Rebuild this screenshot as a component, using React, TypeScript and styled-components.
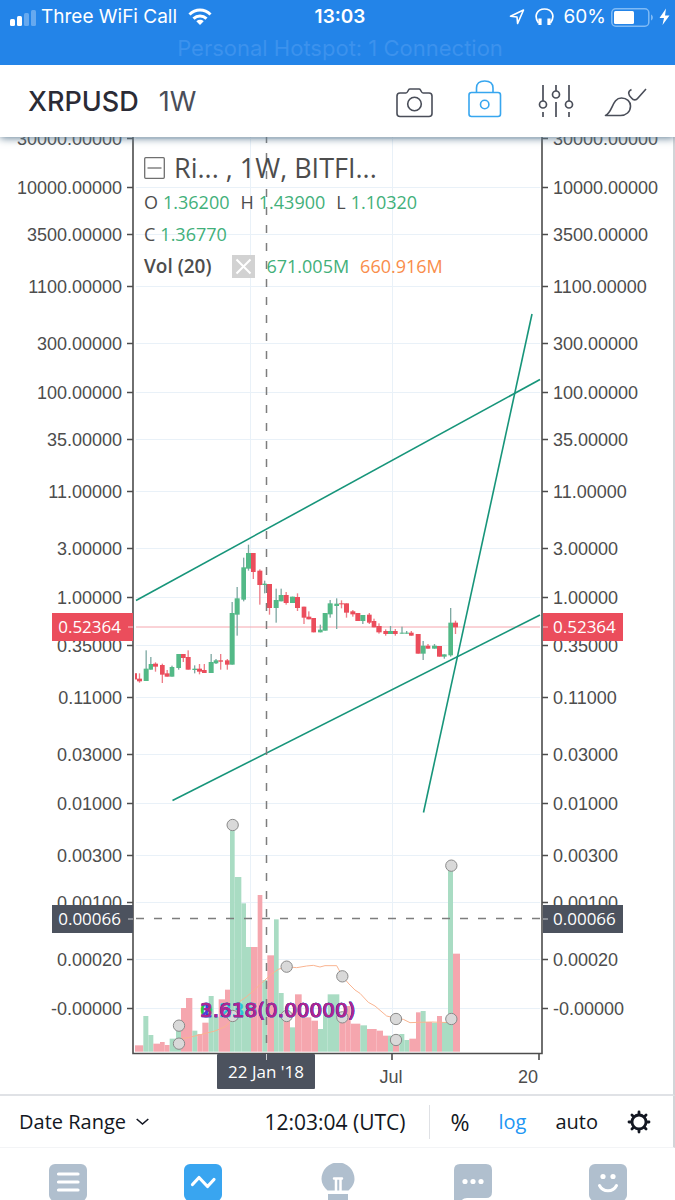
import React from "react";
import styled, { createGlobalStyle } from "styled-components";

const GlobalStyle = createGlobalStyle`
  * { box-sizing: border-box; }
  body { margin: 0; background: #ffffff; }
  button { font: inherit; color: inherit; background: none; border: 0; padding: 0; margin: 0; cursor: pointer; }
  svg { display: block; }
`;

const Page = styled.div`
  display: flex;
  flex-direction: column;
  font-family: "Open Sans", "Noto Sans", sans-serif;
  color: #131722;
`;

const StatusBar = styled.div`
  background: #2384e8;
  color: #ffffff;
  font-family: Inter, "Liberation Sans", sans-serif;
  font-size: 19px;
  line-height: 24px;
  height: 65px;
  padding: 5px 5px 0 10px;
`;

const StatusRow = styled.div`
  display: grid;
  grid-template-columns: 1fr auto 1fr;
  align-items: center;
`;

const StatusSide = styled.div<{ $end?: boolean }>`
  display: flex;
  align-items: center;
  gap: ${(p) => (p.$end ? 10 : 5)}px;
  justify-content: ${(p) => (p.$end ? "flex-end" : "flex-start")};
  white-space: nowrap;
`;

const Carrier = styled.span`
  margin-right: 6px;
`;

const BatteryGroup = styled.span`
  display: flex;
  align-items: center;
  gap: 5px;
`;

const Clock = styled.span`
  font-weight: 600;
`;

const Hotspot = styled.div`
  margin-top: 7px;
  text-align: center;
  font-size: 22px;
  color: #3c92ed;
`;

const Header = styled.header`
  position: relative;
  z-index: 2;
  display: flex;
  align-items: center;
  justify-content: space-between;
  height: 72px;
  padding: 0 28px;
  background: #ffffff;
  box-shadow: 0 1px 8px #5f7c92;
  clip-path: inset(0 0 -12px 0);
  font-family: Inter, "Liberation Sans", sans-serif;
  font-size: 27px;
`;

const SymbolGroup = styled.div`
  display: flex;
  gap: 20px;
`;

const SymbolButton = styled.button`
  color: #2b2b35;
  font-weight: 500;
`;

const IntervalButton = styled.button`
  color: #4a4e59;
`;

const ToolGroup = styled.div`
  display: flex;
  align-items: center;
  gap: 30px;
`;

const ToolButton = styled.button<{ $active?: boolean }>`
  color: ${(p) => (p.$active ? "#37a6ef" : "#4a4e59")};
`;

const ChartArea = styled.main`
  position: relative;
  overflow: hidden;
  border-right: 2px solid #d2d5d8;
  border-bottom: 2px solid #e0e2e6;
`;

const ChartSvg = styled.svg`
  width: 100%;
  height: auto;
`;

const Legend = styled.div`
  position: absolute;
  top: 12px;
  left: 144px;
  display: flex;
  flex-direction: column;
  color: #4d4d4d;
  font-size: 18px;
  line-height: 32px;
  white-space: nowrap;
`;

const LegendTitle = styled.div`
  display: flex;
  align-items: center;
  gap: 9px;
  height: 37px;
  font-size: 27px;
`;

const LegendRow = styled.div`
  display: flex;
  align-items: center;
  gap: 11px;
`;

const Quote = styled.span`
  display: flex;
  gap: 5px;
`;

const Value = styled.span<{ $tone?: string }>`
  color: ${(p) => p.$tone ?? "#42b07a"};
`;

const StudyName = styled.span`
  font-size: 19px;
  font-weight: 600;
  margin-right: 10px;
`;

const Toolbar = styled.div`
  display: flex;
  align-items: center;
  height: 52px;
  padding: 0 22px 0 19px;
  border-right: 2px solid #d2d5d8;
  border-bottom: 1px solid #f3f4f6;
  font-size: 20px;
  white-space: nowrap;
`;

const RangeButton = styled.button`
  display: flex;
  align-items: center;
  gap: 10px;
  margin-right: auto;
`;

const UtcClock = styled.span`
  font-size: 21px;
`;

const Divider = styled.span`
  width: 1px;
  height: 34px;
  margin: 0 20px 0 24px;
  background: #dfe1e5;
`;

const ScaleGroup = styled.div`
  display: flex;
  align-items: center;
  gap: 29px;
`;

const ScaleButton = styled.button<{ $active?: boolean; $large?: boolean }>`
  color: ${(p) => (p.$active ? "#2196f3" : "#131722")};
  font-size: ${(p) => (p.$large ? 23 : 20)}px;
`;

const Tabs = styled.nav`
  display: grid;
  grid-template-columns: repeat(5, 1fr);
  height: 52px;
  padding-top: 15px;
  overflow: hidden;
`;

const Tab = styled.button<{ $active?: boolean }>`
  display: flex;
  justify-content: center;
  align-items: flex-start;
  color: ${(p) => (p.$active ? "#39a5f0" : "#b0bfce")};
`;

const AxisText = styled.text`
  font-family: "Liberation Sans", Arial, sans-serif;
  font-size: 18px;
  fill: #4d4d4d;
`;

const TagText = styled.text`
  font-family: "Open Sans", "Noto Sans", sans-serif;
  font-size: 17px;
  fill: #ffffff;
`;

const LevelText = styled.text`
  font-family: "DejaVu Sans", Verdana, sans-serif;
  font-size: 20px;
  stroke-width: 0.6px;
`;

const GREEN = "#53b987";
const RED = "#eb4d5c";

const priceTicks: [string, number][] = [
  ["30000.00000", 138], ["10000.00000", 187], ["3500.00000", 234], ["1100.00000", 286],
  ["300.00000", 343], ["100.00000", 392], ["35.00000", 439], ["11.00000", 491],
  ["3.00000", 548], ["1.00000", 597], ["0.35000", 645], ["0.11000", 697],
  ["0.03000", 754], ["0.01000", 803], ["0.00300", 855], ["0.00100", 902],
  ["0.00020", 959], ["-0.00000", 1008],
];

// left, right, body top, body bottom, high, low, direction
type Candle = [number, number, number, number, number, number, "u" | "d"];
const candles: Candle[] = [
  [30, 36, 430, 448, 430, 448, "d"], [36, 51, 446, 454, 430, 458, "d"],
  [56, 71, 416, 453, 361, 453, "u"], [71, 84, 402, 419, 381, 419, "u"],
  [84, 99, 401, 410, 397, 425, "d"], [105, 119, 405, 434, 401, 459, "d"],
  [119, 134, 430, 440, 420, 440, "d"], [134, 148, 411, 440, 407, 440, "u"],
  [154, 168, 372, 414, 372, 419, "u"], [168, 182, 372, 384, 372, 396, "d"],
  [182, 197, 381, 419, 361, 419, "d"], [202, 216, 416, 420, 406, 430, "u"],
  [216, 231, 416, 425, 402, 433, "d"], [231, 245, 420, 429, 402, 429, "d"],
  [251, 266, 396, 429, 372, 429, "u"], [266, 280, 391, 400, 387, 402, "u"],
  [280, 294, 391, 395, 372, 419, "d"], [300, 314, 391, 404, 387, 419, "d"],
  [314, 329, 249, 404, 216, 404, "u"], [329, 344, 205, 254, 171, 317, "u"],
  [349, 363, 112, 209, 83, 214, "u"], [363, 378, 69, 116, 44, 122, "u"],
  [378, 392, 69, 126, 69, 147, "d"], [397, 412, 122, 165, 118, 224, "d"],
  [412, 426, 161, 165, 152, 190, "u"], [426, 441, 162, 234, 162, 254, "d"],
  [446, 461, 210, 234, 176, 278, "u"], [461, 476, 195, 214, 176, 214, "u"],
  [476, 491, 195, 219, 186, 224, "d"], [495, 510, 200, 219, 200, 219, "u"],
  [510, 525, 201, 234, 190, 243, "d"], [530, 544, 230, 263, 230, 282, "d"],
  [544, 559, 260, 268, 244, 268, "d"], [559, 573, 264, 307, 264, 307, "d"],
  [579, 593, 299, 307, 284, 307, "u"], [593, 608, 249, 302, 249, 302, "u"],
  [608, 623, 220, 253, 210, 263, "u"], [628, 642, 221, 228, 205, 297, "u"],
  [642, 657, 220, 223, 211, 235, "d"], [657, 672, 220, 248, 220, 263, "d"],
  [676, 691, 244, 253, 240, 260, "d"], [691, 706, 249, 273, 249, 273, "d"],
  [706, 721, 255, 273, 255, 282, "u"], [726, 740, 254, 278, 249, 282, "d"],
  [740, 754, 273, 292, 266, 292, "d"], [754, 770, 288, 307, 280, 311, "d"],
  [775, 789, 303, 312, 298, 317, "d"], [789, 804, 303, 312, 288, 312, "u"],
  [804, 818, 303, 312, 297, 317, "d"], [824, 838, 308, 311, 290, 311, "u"],
  [838, 852, 308, 311, 303, 311, "u"], [852, 866, 308, 317, 303, 317, "d"],
  [872, 887, 312, 371, 312, 371, "d"], [887, 902, 347, 371, 333, 390, "u"],
  [902, 916, 347, 356, 342, 356, "d"], [921, 936, 347, 356, 342, 356, "u"],
  [936, 951, 348, 380, 348, 380, "d"], [951, 965, 373, 380, 373, 386, "u"],
  [970, 984, 278, 376, 234, 380, "u"], [984, 999, 278, 292, 272, 312, "d"],
];

// left, right, top, direction
type Bar = [number, number, number, "u" | "d"];
const VOLUME_BASE = 755;
const volumes: Bar[] = [
  [30, 55, 736, "d"], [55, 70, 648, "u"], [70, 85, 705, "u"], [85, 105, 731, "d"],
  [105, 119, 726, "d"], [119, 134, 735, "d"], [134, 153, 716, "u"], [153, 168, 670, "u"],
  [168, 183, 624, "d"], [183, 202, 594, "d"], [202, 217, 692, "u"], [217, 232, 702, "d"],
  [232, 251, 668, "d"], [251, 266, 588, "u"], [266, 281, 650, "u"], [281, 300, 598, "d"],
  [300, 315, 569, "d"], [315, 329, 75, "u"], [329, 349, 231, "u"], [349, 363, 310, "u"],
  [363, 378, 441, "u"], [378, 398, 441, "d"], [398, 412, 285, "d"], [412, 427, 540, "u"],
  [427, 447, 466, "d"], [447, 461, 358, "u"], [461, 476, 579, "u"], [476, 495, 650, "d"],
  [495, 510, 682, "u"], [510, 530, 583, "d"], [530, 559, 652, "d"], [559, 579, 662, "d"],
  [579, 594, 687, "u"], [594, 608, 640, "u"], [608, 643, 583, "u"], [643, 662, 655, "d"],
  [662, 677, 618, "d"], [677, 706, 671, "d"], [706, 726, 676, "u"], [726, 755, 687, "d"],
  [755, 774, 692, "d"], [774, 789, 707, "d"], [789, 804, 707, "u"], [804, 823, 735, "d"],
  [823, 838, 702, "u"], [838, 853, 720, "u"], [853, 873, 716, "d"], [873, 887, 637, "d"],
  [887, 902, 633, "u"], [902, 921, 666, "d"], [921, 936, 668, "u"], [936, 951, 648, "d"],
  [951, 969, 666, "u"], [969, 984, 197, "u"], [984, 1005, 461, "d"],
];

const averagePath =
  "M162 716 L190 713 L230 703 L270 693 L300 680 L325 656 L345 604 L365 590 L390 568 L420 540 L440 522 L460 508 L485 500 L515 503 L545 498 L565 496 L585 501 L600 497 L635 497 L653 530 L672 552 L690 570 L705 580 L730 607 L750 618 L785 648 L813 655 L835 658 L855 668 L880 667 L920 666 L979 668";

const handles: [number, number][] = [
  [162, 677], [162, 731], [323, 75], [323, 648], [485, 500], [485, 648],
  [652, 529], [652, 652], [813, 657], [813, 720], [979, 197], [979, 657],
];

const levels: [string, string][] = [
  ["0.236(0.00000)", "#26c6da"],
  ["0.618(0.00000)", "#2fc53a"],
  ["1.618(0.00000)", "#2b3fe0"],
  ["2.618(0.00000)", "#5a35d6"],
  ["3.618(0.00000)", "#b0258f"],
];

function PriceTag({ y, color, label }: { y: number; color: string; label: string }) {
  return (
    <g>
      <rect x="52" y={y - 14} width="81" height="28" fill={color} />
      <rect x="543" y={y - 14} width="80" height="28" fill={color} />
      <path d={`M128 ${y}H133M543 ${y}H548`} stroke="#ffffff" opacity="0.7" />
      <TagText x="121" y={y + 6} textAnchor="end">{label}</TagText>
      <TagText x="553" y={y + 6}>{label}</TagText>
    </g>
  );
}

function Chart() {
  return (
    <ChartSvg viewBox="0 137 673 957" role="img" aria-label="XRPUSD weekly price chart">
      <g stroke="#e9f1f8" strokeWidth="1">
        {priceTicks.map(([label, y]) => (
          <path key={label} d={`M136 ${y + 0.5}H540`} />
        ))}
        <path d="M250.5 137V1052M392.5 137V1052" />
      </g>

      <g transform="translate(125 800) scale(0.33333)">
        {volumes.map(([l, r, top, dir]) => (
          <rect key={l} x={l} y={top} width={r - l} height={VOLUME_BASE - top} fill={dir === "u" ? "#a9dcc3" : "#f5a6ae"} />
        ))}
        <path d={averagePath} fill="none" stroke="#f9b491" strokeWidth="3" />
      </g>

      <path d="M136 627H540" stroke="#f5a6ae" />

      <g transform="translate(125 530) scale(0.33333)">
        {candles.map(([l, r, top, bottom, high, low, dir]) => (
          <g key={l}>
            <rect x={(l + r) / 2 - 2} y={high} width="4" height={low - high} fill={dir === "u" ? "#7fa9a3" : "#ee7d88"} />
            <rect x={l} y={top} width={r - l} height={bottom - top} fill={dir === "u" ? GREEN : RED} />
          </g>
        ))}
      </g>

      <g stroke="#17957a" strokeWidth="1.6">
        <path d="M136 600.5L540 379.5" />
        <path d="M172.5 800.5L540 615" />
        <path d="M423.5 812.5L532 314" />
      </g>

      <g transform="translate(125 800) scale(0.33333)" fill="#d9d9d9" stroke="#8a8a8a" strokeWidth="3">
        {handles.map(([cx, cy]) => (
          <circle key={`${cx}-${cy}`} cx={cx} cy={cy} r="17" />
        ))}
      </g>

      {levels.map(([label, color]) => (
        <LevelText key={label} x="200" y="1017" fill={color} stroke={color}>{label}</LevelText>
      ))}

      <g stroke="#7d7d7d" strokeWidth="1.5" strokeDasharray="8 10">
        <path d="M266.5 135V1052" />
        <path d="M136 918.5H540" />
      </g>

      <g stroke="#4d4d4d" strokeWidth="1.6" fill="none">
        <path d="M133 137V1053.5H542V137" />
        {priceTicks.map(([label, y]) => (
          <path key={label} d={`M127 ${y + 0.5}H133M542 ${y + 0.5}H548`} />
        ))}
        <path d="M392 1053V1060M539 1053V1060" />
      </g>

      {priceTicks.map(([label, y]) => (
        <g key={label}>
          <AxisText x="122" y={y + 7} textAnchor="end">{label}</AxisText>
          <AxisText x="553" y={y + 7}>{label}</AxisText>
        </g>
      ))}

      <PriceTag y={627} color="#eb4d5c" label="0.52364" />
      <PriceTag y={919} color="#4c525e" label="0.00066" />

      <rect x="217" y="1054" width="98" height="35" rx="1" fill="#4c525e" />
      <path d="M266.5 1054V1060" stroke="#ffffff" opacity="0.7" />
      <TagText x="266" y="1078" textAnchor="middle">22 Jan '18</TagText>
      <AxisText x="391" y="1083" textAnchor="middle">Jul</AxisText>
      <AxisText x="528" y="1083" textAnchor="middle">20</AxisText>
    </ChartSvg>
  );
}

const SignalIcon = () => (
  <svg width="26" height="17" viewBox="0 0 26 17" fill="#fff" aria-hidden="true">
    <rect x="0" y="10" width="5" height="7" rx="1.5" />
    <rect x="7" y="7" width="5" height="10" rx="1.5" />
    <g opacity="0.3">
      <rect x="14" y="4" width="5" height="13" rx="1.5" />
      <rect x="21" y="1" width="5" height="16" rx="1.5" />
    </g>
  </svg>
);

const WifiIcon = () => (
  <svg width="24" height="18" viewBox="0 0 24 18" fill="none" stroke="#fff" strokeWidth="3" aria-hidden="true">
    <path d="M1.5 6.5C7.5 0.5 16.5 0.5 22.5 6.5" />
    <path d="M5.500 10.6C9.3 7 14.7 7 18.5 10.6" />
    <path d="M12 17L8.3 13.2C10.5 11.3 13.5 11.3 15.7 13.2Z" fill="#fff" stroke="none" />
  </svg>
);

const LocationIcon = () => (
  <svg width="16" height="16" viewBox="0 0 16 16" fill="none" stroke="#fff" strokeWidth="1.6" strokeLinejoin="round" aria-hidden="true">
    <path d="M1.5 7.3L14.5 1L8.6 14.5L8 8Z" />
  </svg>
);

const HeadphonesIcon = () => (
  <svg width="19" height="18" viewBox="0 0 19 18" fill="none" stroke="#fff" strokeWidth="1.7" aria-hidden="true">
    <path d="M3.5 15C-1.5 8 2 1 9.5 1S20.5 8 15.5 15" />
    <path d="M5 10.5V17M14 10.5V17" strokeWidth="3.2" />
  </svg>
);

const BatteryIcon = () => (
  <svg width="43" height="19" viewBox="0 0 43 19" fill="none" aria-hidden="true">
    <rect x="0.8" y="0.8" width="37" height="17.4" rx="4" stroke="#7fbaf5" strokeWidth="1.5" />
    <rect x="3" y="3" width="20" height="13" rx="1.5" fill="#fff" />
    <path d="M40 6.5C42.5 7.5 42.5 11.5 40 12.5Z" fill="#7fbaf5" />
  </svg>
);

const BoltIcon = () => (
  <svg width="11" height="18" viewBox="0 0 11 18" fill="#fff" aria-hidden="true">
    <path d="M7 0.5L0.5 10H5L3.5 17L10.5 7.5H6Z" />
  </svg>
);

const CameraIcon = () => (
  <svg width="38" height="44" viewBox="0 0 38 44" fill="none" stroke="currentColor" strokeWidth="1.6" aria-hidden="true">
    <path d="M4 14H10Q11 14 12 12L12.500 11Q13 10 14 10H23Q24 10 24.500 11L25 12Q26 14 27 14H33Q36 14 36 17V34.500Q36 37.500 33 37.500H4Q1 37.500 1 34.500V17Q1 14 4 14Z" strokeLinejoin="round" />
    <circle cx="18.5" cy="25" r="6.8" />
  </svg>
);

const LockIcon = () => (
  <svg width="38" height="44" viewBox="-4 0 38 44" fill="none" stroke="currentColor" strokeWidth="1.6" aria-hidden="true">
    <rect x="1" y="13.500" width="31.5" height="24" rx="2.5" />
    <path d="M8.5 13.500V9Q8.500 2 16.7 2T25 9V13.500" />
    <circle cx="16.7" cy="25.5" r="4.2" />
  </svg>
);

const SlidersIcon = () => (
  <svg width="42" height="44" viewBox="-6 0 42 44" fill="none" stroke="currentColor" strokeWidth="1.7" aria-hidden="true">
    <path d="M5 6V22M5 33V38M18 6V12M18 23V38M31 6V22M31 33V38" />
    <circle cx="5" cy="25.5" r="3.5" />
    <circle cx="18" cy="15.5" r="3.5" />
    <circle cx="31" cy="25.5" r="3.5" />
  </svg>
);

const BrushIcon = () => (
  <svg width="43" height="44" viewBox="0 0 43 44" fill="none" stroke="currentColor" strokeWidth="1.6" aria-hidden="true">
    <path d="M1.500 36.500C9 33 8 19 17.500 19C23 19 26.500 22.500 26.500 27C26.500 33 22 36.500 16.500 36.500Z" strokeLinejoin="round" />
    <path d="M27.500 10.500C23.500 12.500 24 15.500 27.500 19C29.500 21.500 32 21.500 34 19L42 10" />
  </svg>
);

const CollapseIcon = () => (
  <svg width="21" height="22" viewBox="0 0 21 22" fill="none" stroke="#6f6f6f" strokeWidth="1.3" aria-hidden="true">
    <rect x="0.7" y="0.7" width="19.6" height="20.6" rx="1" />
    <path d="M3.5 11H17.5" />
  </svg>
);

const CloseIcon = () => (
  <svg width="23" height="23" viewBox="0 0 23 23" aria-hidden="true">
    <rect width="23" height="23" fill="#d2d2d2" />
    <path d="M4.5 4.5L18.5 18.5M18.5 4.5L4.5 18.5" stroke="#fff" strokeWidth="2" />
  </svg>
);

const ChevronIcon = () => (
  <svg width="13" height="8" viewBox="0 0 13 8" fill="none" stroke="currentColor" strokeWidth="1.6" aria-hidden="true">
    <path d="M0.7 1L6.5 6L12.3 1" />
  </svg>
);

const GearIcon = () => (
  <svg width="24" height="24" viewBox="0 0 24 24" fill="none" stroke="currentColor" aria-hidden="true">
    <circle cx="12" cy="12" r="7" strokeWidth="2.8" />
    {[0, 45, 90, 135, 180, 225, 270, 315].map((a) => (
      <path key={a} d="M12 4.5V2" strokeWidth="2.8" strokeLinecap="round" transform={`rotate(${a} 12 12)`} />
    ))}
  </svg>
);

const ListTabIcon = () => (
  <svg width="38" height="38" viewBox="0 0 38 38" aria-hidden="true">
    <rect y="1" width="38" height="37" rx="6" fill="currentColor" />
    <path d="M9.5 11H29M9.5 19H29M9.5 27H29" stroke="#fff" strokeWidth="3.2" strokeLinecap="round" />
  </svg>
);

const ChartTabIcon = () => (
  <svg width="38" height="38" viewBox="0 0 38 38" aria-hidden="true">
    <rect y="1" width="38" height="37" rx="6" fill="currentColor" />
    <path d="M8.5 21.5L15 14.5L23.5 23.5L30 16.5" fill="none" stroke="#fff" strokeWidth="3.2" strokeLinecap="round" strokeLinejoin="round" />
  </svg>
);

const IdeasTabIcon = () => (
  <svg width="34" height="38" viewBox="0 0 34 38" aria-hidden="true">
    <path d="M6.5 27.5C3 24.5 0.5 20.5 0.5 16A16.5 16.5 0 0 1 33.5 16C33.5 20.5 31 24.5 27.5 27.5Z" fill="currentColor" />
    <path d="M7 31H27V38H7Z" fill="currentColor" />
    <path d="M13 15.5H21M15 16V28M19.500 16V28" stroke="#fff" strokeWidth="2.5" strokeLinecap="round" />
  </svg>
);

const ChatTabIcon = () => (
  <svg width="38" height="38" viewBox="0 0 38 38" aria-hidden="true">
    <path d="M6 1H32Q38 1 38 7V29Q38 35 32 35H13Q9 35 7 38H0V7Q0 1 6 1Z" fill="currentColor" />
    <g fill="#fff">
      <circle cx="11" cy="18.5" r="2.6" />
      <circle cx="19" cy="18.5" r="2.6" />
      <circle cx="27" cy="18.5" r="2.6" />
    </g>
  </svg>
);

const ProfileTabIcon = () => (
  <svg width="38" height="38" viewBox="0 0 38 38" aria-hidden="true">
    <rect y="1" width="38" height="37" rx="6" fill="currentColor" />
    <circle cx="14" cy="13.5" r="2.6" fill="#fff" />
    <circle cx="24" cy="13.5" r="2.6" fill="#fff" />
    <path d="M10.5 22.5C14 29.5 24 29.5 27.5 22.5" fill="none" stroke="#fff" strokeWidth="3" strokeLinecap="round" />
  </svg>
);

const quoteRows: [string, string][][] = [
  [["O", "1.36200"], ["H", "1.43900"], ["L", "1.10320"]],
  [["C", "1.36770"]],
];

export default function App() {
  return (
    <Page>
      <GlobalStyle />
      <StatusBar>
        <StatusRow>
          <StatusSide>
            <SignalIcon />
            <Carrier>Three WiFi Call</Carrier>
            <WifiIcon />
          </StatusSide>
          <Clock>13:03</Clock>
          <StatusSide $end>
            <LocationIcon />
            <HeadphonesIcon />
            <BatteryGroup>
              60%
              <BatteryIcon />
              <BoltIcon />
            </BatteryGroup>
          </StatusSide>
        </StatusRow>
        <Hotspot>Personal Hotspot: 1 Connection</Hotspot>
      </StatusBar>

      <Header>
        <SymbolGroup>
          <SymbolButton>XRPUSD</SymbolButton>
          <IntervalButton>1W</IntervalButton>
        </SymbolGroup>
        <ToolGroup>
          <ToolButton aria-label="Snapshot"><CameraIcon /></ToolButton>
          <ToolButton aria-label="Lock" $active><LockIcon /></ToolButton>
          <ToolButton aria-label="Indicators"><SlidersIcon /></ToolButton>
          <ToolButton aria-label="Draw"><BrushIcon /></ToolButton>
        </ToolGroup>
      </Header>

      <ChartArea>
        <Chart />
        <Legend>
          <LegendTitle>
            <button aria-label="Collapse legend"><CollapseIcon /></button>
            <span>Ri... , 1W, BITFI...</span>
          </LegendTitle>
          {quoteRows.map((row) => (
            <LegendRow key={row[0][0]}>
              {row.map(([name, value]) => (
                <Quote key={name}>
                  <span>{name}</span>
                  <Value>{value}</Value>
                </Quote>
              ))}
            </LegendRow>
          ))}
          <LegendRow>
            <StudyName>Vol (20)</StudyName>
            <button aria-label="Remove study"><CloseIcon /></button>
            <Value>671.005M</Value>
            <Value $tone="#f98d4b">660.916M</Value>
          </LegendRow>
        </Legend>
      </ChartArea>

      <Toolbar>
        <RangeButton aria-haspopup="menu">
          Date Range
          <ChevronIcon />
        </RangeButton>
        <UtcClock>12:03:04 (UTC)</UtcClock>
        <Divider />
        <ScaleGroup>
          <ScaleButton $large>%</ScaleButton>
          <ScaleButton $active>log</ScaleButton>
          <ScaleButton>auto</ScaleButton>
          <ScaleButton aria-label="Settings"><GearIcon /></ScaleButton>
        </ScaleGroup>
      </Toolbar>

      <Tabs>
        <Tab aria-label="Watchlist"><ListTabIcon /></Tab>
        <Tab aria-label="Chart" $active><ChartTabIcon /></Tab>
        <Tab aria-label="Ideas"><IdeasTabIcon /></Tab>
        <Tab aria-label="Chat"><ChatTabIcon /></Tab>
        <Tab aria-label="Profile"><ProfileTabIcon /></Tab>
      </Tabs>
    </Page>
  );
}
